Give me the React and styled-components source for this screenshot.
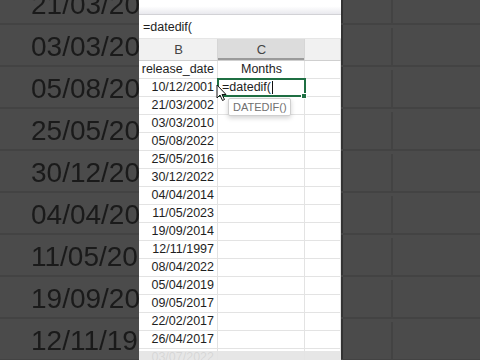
import React from 'react';
import styled, { createGlobalStyle } from 'styled-components';

const COLORS = {
  backdrop: '#4b4b4b',
  backdropLine: '#434343',
  backdropText: '#1a1a1a',
  grid: '#e3e3e3',
  header: '#f1f1f1',
  headerActive: '#dcdcdc',
  text: '#1e1e1e',
  green: '#1f6f43',
};

const FONT = '"Liberation Sans", Arial, sans-serif';

const bgDates = [
  '21/03/20', '03/03/20', '05/08/20', '25/05/20', '30/12/20',
  '04/04/20', '11/05/20', '19/09/20', '12/11/19',
];

const dates = [
  '10/12/2001', '21/03/2002', '03/03/2010', '05/08/2022', '25/05/2016',
  '30/12/2022', '04/04/2014', '11/05/2023', '19/09/2014', '12/11/1997',
  '08/04/2022', '05/04/2019', '09/05/2017', '22/02/2017', '26/04/2017',
  '03/07/2022',
];

const GlobalStyle = createGlobalStyle`
  html, body { margin: 0; padding: 0; }
  body { width: 480px; height: 360px; overflow: hidden; background: ${COLORS.backdrop}; }
`;

const Frame = styled.div`
  display: flex;
  width: 480px;
  height: 360px;
  overflow: hidden;
  font-family: ${FONT};
  background: ${COLORS.backdrop};
`;

const Backdrop = styled.div`
  width: ${p => p.$width}px;
  flex: ${p => (p.$grow ? 1 : 'none')};
  height: 360px;
  overflow: hidden;
  display: flex;
  flex-direction: column;
  filter: blur(0.5px);
`;

const BgRow = styled.div`
  flex: none;
  height: 42px;
  border-bottom: 2px solid ${COLORS.backdropLine};
  display: flex;
  align-items: center;
  padding-top: 3px;
  box-sizing: border-box;
  padding-left: 31px;
  white-space: nowrap;
  overflow: hidden;
  font-size: 28px;
  color: ${COLORS.backdropText};
  &:first-child { margin-top: -17px; }
`;

const BgCell = styled.div`
  width: 50px;
  height: 100%;
  border-right: 2px solid ${COLORS.backdropLine};
  margin-left: -31px;
`;

const Sheet = styled.div`
  position: relative;
  width: 202px;
  height: 360px;
  flex: none;
  background: #fff;
  overflow: hidden;
  color: ${COLORS.text};
  font-size: 12.5px;
  box-shadow: 2px 0 0 #333;
`;

const Ribbon = styled.div`
  height: 14px;
  background: linear-gradient(#fff 0, #fff 45%, #e9e9ee 100%);
  border-bottom: 1px solid #d2d2d6;
`;

const FormulaBar = styled.div`
  height: 23px;
  display: flex;
  align-items: center;
  padding-left: 4px;
  font-size: 12.5px;
  border-bottom: 1px solid #e6e6e6;
`;

const Row = styled.div`
  display: grid;
  grid-template-columns: 79px 87px 1fr;
  height: ${p => (p.$head ? 22 : 18)}px;
  box-sizing: border-box;
  border-bottom: 1px solid ${p => (p.$head ? '#cfcfcf' : COLORS.grid)};
  background: ${p => (p.$head ? COLORS.header : '#fff')};
`;

const Cell = styled.div`
  position: relative;
  display: flex;
  align-items: center;
  justify-content: ${p => p.$align || 'flex-start'};
  padding: 0 3px 0 4px;
  border-right: 1px solid ${COLORS.grid};
  white-space: nowrap;
  line-height: 1;
`;

const HeadCell = styled(Cell)`
  justify-content: center;
  color: #444;
  font-size: 13px;
  border-right: 1px solid #d6d6d6;
  background: ${p => (p.$active ? COLORS.headerActive : 'transparent')};
  box-shadow: ${p => (p.$active ? 'inset 0 -2px 0 #9a9a9a' : 'none')};
`;

const ActiveCell = styled(Cell)`
  outline: 2px solid ${COLORS.green};
  outline-offset: -1px;
  z-index: 2;
  &::after {
    content: '';
    position: absolute;
    right: -3px;
    bottom: -3px;
    width: 4px;
    height: 4px;
    background: ${COLORS.green};
    border: 1px solid #fff;
  }
`;

const Caret = styled.span`
  display: inline-block;
  width: 1px;
  height: 13px;
  margin-left: 1px;
  background: #111;
`;

const Tooltip = styled.div`
  position: absolute;
  left: 89px;
  top: 98px;
  width: 63px;
  height: 18px;
  box-sizing: border-box;
  border: 1px solid #cfcfcf;
  border-radius: 2px;
  background: #fff;
  box-shadow: 0 2px 5px rgba(0, 0, 0, 0.18);
  display: flex;
  align-items: center;
  padding-left: 4px;
  font-size: 11px;
  color: #707070;
  z-index: 3;
`;

const Pointer = styled.svg`
  position: absolute;
  left: 77px;
  top: 84px;
  z-index: 4;
`;

const BottomShade = styled.div`
  position: absolute;
  left: 0;
  right: 0;
  bottom: 0;
  height: 9px;
  background: rgba(228, 228, 228, 0.93);
  z-index: 3;
`;

const App = () => (
  <>
    <GlobalStyle />
    <Frame>
      <Backdrop $width={139}>
        {bgDates.map(d => (
          <BgRow key={d}>{d}</BgRow>
        ))}
      </Backdrop>

      <Sheet>
        <Ribbon />
        <FormulaBar>=datedif(</FormulaBar>
        <Row $head>
          <HeadCell>B</HeadCell>
          <HeadCell $active>C</HeadCell>
          <HeadCell />
        </Row>
        <Row>
          <Cell $align="flex-end">release_date</Cell>
          <Cell $align="center">Months</Cell>
          <Cell />
        </Row>
        {dates.map((d, i) => (
          <Row key={d + i}>
            <Cell $align="flex-end">{d}</Cell>
            {i === 0 ? (
              <ActiveCell>
                =datedif(<Caret />
              </ActiveCell>
            ) : (
              <Cell />
            )}
            <Cell />
          </Row>
        ))}
        <Tooltip>DATEDIF()</Tooltip>
        <Pointer width="12" height="18" viewBox="0 0 12 18">
          <path d="M1 1 L1 14 L4 11 L6.5 16.5 L8.5 15.5 L6 10.5 L10 10.5 Z" fill="#fff" stroke="#111" strokeWidth="1" strokeLinejoin="round" />
        </Pointer>
        <BottomShade />
      </Sheet>

      <Backdrop $grow>
        {bgDates.map(d => (
          <BgRow key={d}>
            <BgCell />
          </BgRow>
        ))}
      </Backdrop>
    </Frame>
  </>
);

export default App;
